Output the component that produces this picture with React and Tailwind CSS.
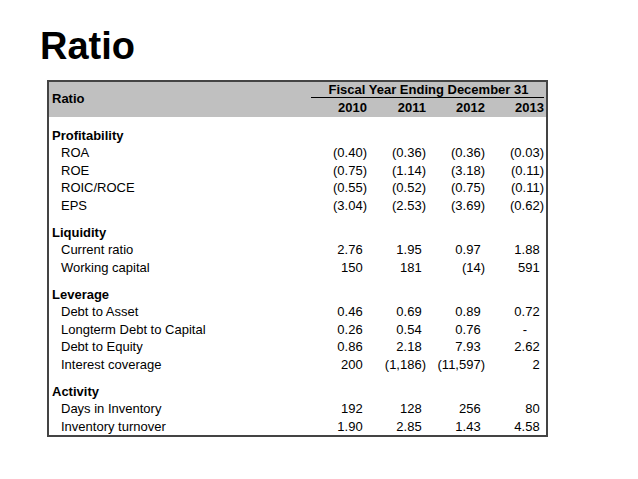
const sections = [
  {
    name: "Profitability",
    rows: [
      ["ROA", ["(0.40)", "(0.36)", "(0.36)", "(0.03)"]],
      ["ROE", ["(0.75)", "(1.14)", "(3.18)", "(0.11)"]],
      ["ROIC/ROCE", ["(0.55)", "(0.52)", "(0.75)", "(0.11)"]],
      ["EPS", ["(3.04)", "(2.53)", "(3.69)", "(0.62)"]],
    ],
  },
  {
    name: "Liquidity",
    rows: [
      ["Current ratio", ["2.76", "1.95", "0.97", "1.88"]],
      ["Working capital", ["150", "181", "(14)", "591"]],
    ],
  },
  {
    name: "Leverage",
    rows: [
      ["Debt to Asset", ["0.46", "0.69", "0.89", "0.72"]],
      ["Longterm Debt to Capital", ["0.26", "0.54", "0.76", "-"]],
      ["Debt to Equity", ["0.86", "2.18", "7.93", "2.62"]],
      ["Interest coverage", ["200", "(1,186)", "(11,597)", "2"]],
    ],
  },
  {
    name: "Activity",
    rows: [
      ["Days in Inventory", ["192", "128", "256", "80"]],
      ["Inventory turnover", ["1.90", "2.85", "1.43", "4.58"]],
    ],
  },
];

const Num = ({ value }) => {
  if (value === "-") {
    return <div className="text-right pr-[17px]">-</div>;
  }
  const neg = value.startsWith("(");
  return (
    <div className="text-right whitespace-nowrap">
      {value}
      {!neg && <span className="invisible">)</span>}
    </div>
  );
};

const App = () => {
  return (
    <div className="w-[638px] h-[479px] bg-white text-black font-['Liberation_Sans',Arial,sans-serif]">
      <h1 className="pl-[40px] pt-[27px] text-[38px] leading-none font-bold">
        Ratio
      </h1>
      <div className="ml-[47px] mt-[15px] w-[501px] border-2 border-[#444] text-[13px] leading-none">
        {/* header */}
        <div className="bg-[#c0c0c0] grid grid-cols-[1fr_59px_59px_59px_59px] pr-[2px] font-bold">
          <div className="row-span-2 flex items-center pl-[3px] pb-[2px]">Ratio</div>
          <div className="col-span-4 h-[16px] flex items-center justify-center border-b border-black ml-[3px] pl-[2px]">
            Fiscal Year Ending December 31
          </div>
          {["2010", "2011", "2012", "2013"].map((y) => (
            <div key={y} className="h-[19px] flex items-center justify-end">
              {y}
            </div>
          ))}
        </div>

        {/* body */}
        {sections.map((s) => (
          <div key={s.name} className="pt-[9.5px]">
            <div className="h-[17.5px] flex items-center pl-[3px] font-bold">
              {s.name}
            </div>
            {s.rows.map(([label, vals]) => (
              <div
                key={label}
                className="h-[17.5px] grid grid-cols-[1fr_59px_59px_59px_59px] items-center pr-[2px]"
              >
                <div className="pl-[12px] whitespace-nowrap">{label}</div>
                {vals.map((v, i) => (
                  <Num key={i} value={v} />
                ))}
              </div>
            ))}
          </div>
        ))}
      </div>
    </div>
  );
};

export default App;
